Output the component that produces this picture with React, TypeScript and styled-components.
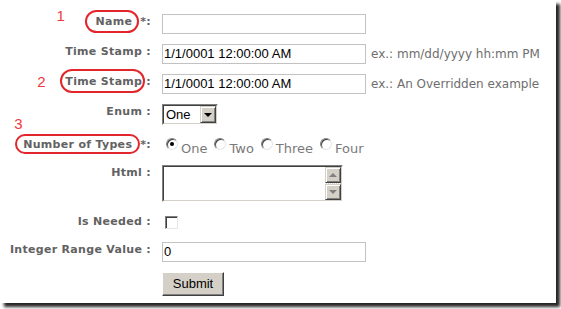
import React from 'react';
import styled, { createGlobalStyle } from 'styled-components';

const Global = createGlobalStyle`
  html, body { margin: 0; padding: 0; background: #fff; }
  body { width: 561px; height: 309px; overflow: hidden; }
`;

const Frame = styled.div`
  width: 556px;
  height: 303px;
  background: #fff;
  box-shadow: 4px 4px 3px rgba(0, 0, 0, 0.85);
  box-sizing: border-box;
  padding-top: 14px;
`;

const Form = styled.div`
  display: grid;
  grid-template-columns: 151px 1fr;
  column-gap: 11px;
  row-gap: 10px;
  align-items: center;
`;

const Label = styled.div<{ $pad?: number }>`
  font-family: "DejaVu Sans", Verdana, sans-serif;
  font-weight: bold;
  font-size: 11px;
  letter-spacing: 0.3px;
  line-height: 13px;
  color: #626262;
  text-align: right;
  white-space: nowrap;
  align-self: start;
  padding-top: ${(p) => p.$pad ?? 1}px;
`;

const Mark = styled.span<{ $l: number; $r: number; $t: number; $b: number; $gap: number }>`
  position: relative;
  margin-right: ${(p) => p.$gap}px;
  &::before {
    content: '';
    position: absolute;
    left: ${(p) => -p.$l}px;
    right: ${(p) => -p.$r}px;
    top: ${(p) => -p.$t}px;
    bottom: ${(p) => -p.$b}px;
    border: 2px solid #e3262b;
    border-radius: 13px;
  }
`;

const Num = styled.span<{ $x: number; $y: number }>`
  position: absolute;
  left: ${(p) => p.$x}px;
  top: ${(p) => p.$y}px;
  font-family: "Liberation Sans", Arial, sans-serif;
  font-weight: normal;
  font-size: 15px;
  line-height: 15px;
  letter-spacing: 0;
  color: #f0383c;
`;

const Field = styled.div`
  display: flex;
  align-items: center;
  gap: 5px;
  min-height: 20px;
`;

const TextBox = styled.div`
  width: 204px;
  height: 20px;
  box-sizing: border-box;
  border: 1px solid #c2c2c2;
  padding: 0 1px;
  font-family: "Liberation Sans", Arial, sans-serif;
  font-size: 13px;
  line-height: 18px;
  color: #000;
  white-space: nowrap;
`;

const Hint = styled.span`
  font-family: "DejaVu Sans", Verdana, sans-serif;
  font-size: 12px;
  color: #6e6e6e;
  white-space: nowrap;
`;

const Select = styled.div`
  width: 56px;
  height: 21px;
  box-sizing: border-box;
  border: 1px solid;
  border-color: #808080 #fff #fff #808080;
  display: flex;
`;

const SelectInner = styled.div`
  flex: 1;
  display: flex;
  border: 1px solid;
  border-color: #404040 #d4d0c8 #d4d0c8 #404040;
`;

const SelectText = styled.div`
  flex: 1;
  padding-left: 2px;
  font-family: "Liberation Sans", Arial, sans-serif;
  font-size: 13px;
  line-height: 17px;
  color: #000;
`;

const ScrollBtn = styled.div`
  width: 16px;
  box-sizing: border-box;
  background: #d4d0c8;
  border: 1px solid;
  border-color: #d4d0c8 #404040 #404040 #d4d0c8;
  box-shadow: inset 1px 1px 0 #fff, inset -1px -1px 0 #808080;
  display: flex;
  align-items: center;
  justify-content: center;
`;

const Arrow = styled.span<{ $up?: boolean; $color?: string }>`
  width: 0;
  height: 0;
  border-left: 4px solid transparent;
  border-right: 4px solid transparent;
  ${(p) =>
    p.$up
      ? `border-bottom: 4px solid ${p.$color || '#000'};`
      : `border-top: 4px solid ${p.$color || '#000'};`}
`;

const Radios = styled.div`
  display: flex;
  align-items: flex-start;
  gap: 7px;
  padding-left: 4px;
  height: 20px;
  padding-top: 6px;
  box-sizing: border-box;
`;

const Option = styled.label`
  display: inline-flex;
  align-items: flex-start;
  gap: 3px;
  font-family: "DejaVu Sans", Verdana, sans-serif;
  font-size: 13px;
  line-height: 15px;
  color: #7a7a7a;
`;

const Radio = styled.span<{ $on?: boolean }>`
  width: 12px;
  height: 12px;
  box-sizing: border-box;
  margin-top: -3px;
  border-radius: 50%;
  border: 1px solid;
  border-color: #808080 #e6e6e6 #e6e6e6 #808080;
  background: #fff;
  box-shadow: inset 1px 1px 0 #404040;
  display: flex;
  align-items: center;
  justify-content: center;
  &::after {
    content: '';
    width: 4px;
    height: 4px;
    border-radius: 50%;
    background: ${(p) => (p.$on ? '#000' : 'transparent')};
  }
`;

const TextArea = styled.div`
  width: 181px;
  height: 37px;
  box-sizing: border-box;
  border: 1px solid;
  border-color: #808080 #fff #fff #808080;
  display: flex;
`;

const TextAreaInner = styled.div`
  flex: 1;
  display: flex;
  justify-content: flex-end;
  border: 1px solid;
  border-color: #404040 #d4d0c8 #d4d0c8 #404040;
  background: #fff;
`;

const ScrollBar = styled.div`
  width: 16px;
  display: flex;
  flex-direction: column;
  justify-content: space-between;
  background: repeating-linear-gradient(90deg, #fff 0 1px, #d4d0c8 1px 2px);
`;

const ScrollPart = styled(ScrollBtn)`
  height: 16px;
`;

const Check = styled.span`
  display: block;
  width: 13px;
  height: 13px;
  margin-left: 3px;
  box-sizing: border-box;
  border: 1px solid;
  border-color: #808080 #e6e6e6 #e6e6e6 #808080;
  box-shadow: inset 1px 1px 0 #404040;
  background: #fff;
`;

const Button = styled.div`
  width: 62px;
  height: 24px;
  box-sizing: border-box;
  background: #d4d0c8;
  border: 1px solid;
  border-color: #fff #404040 #404040 #fff;
  box-shadow: inset -1px -1px 0 #808080;
  font-family: "Liberation Sans", Arial, sans-serif;
  font-size: 13px;
  line-height: 21px;
  text-align: center;
  color: #000;
`;

const Empty = styled.div``;

export default function App() {
  return (
    <>
      <Global />
      <Frame>
        <Form>
          <Label>
            <Mark $l={10} $r={7} $t={5} $b={5} $gap={8}>
              Name
              <Num $x={-39} $y={-7}>1</Num>
            </Mark>
            *:
          </Label>
          <Field>
            <TextBox />
          </Field>

          <Label>Time Stamp :</Label>
          <Field>
            <TextBox>1/1/0001 12:00:00 AM</TextBox>
            <Hint>ex.: mm/dd/yyyy hh:mm PM</Hint>
          </Field>

          <Label>
            <Mark $l={5} $r={3} $t={6} $b={5} $gap={4}>
              Time Stamp
              <Num $x={-28} $y={-1}>2</Num>
            </Mark>
            :
          </Label>
          <Field>
            <TextBox>1/1/0001 12:00:00 AM</TextBox>
            <Hint>ex.: An Overridden example</Hint>
          </Field>

          <Label>Enum :</Label>
          <Field>
            <Select>
              <SelectInner>
                <SelectText>One</SelectText>
                <ScrollBtn>
                  <Arrow />
                </ScrollBtn>
              </SelectInner>
            </Select>
          </Field>

          <Label $pad={3}>
            <Mark $l={8} $r={8} $t={4} $b={3} $gap={8}>
              Number of Types
              <Num $x={-9} $y={-22}>3</Num>
            </Mark>
            *:
          </Label>
          <Radios>
            <Option>
              <Radio $on />
              One
            </Option>
            <Option>
              <Radio />
              Two
            </Option>
            <Option>
              <Radio />
              Three
            </Option>
            <Option>
              <Radio />
              Four
            </Option>
          </Radios>

          <Label>Html :</Label>
          <Field>
            <TextArea>
              <TextAreaInner>
                <ScrollBar>
                  <ScrollPart>
                    <Arrow $up $color="#808080" />
                  </ScrollPart>
                  <ScrollPart>
                    <Arrow $color="#808080" />
                  </ScrollPart>
                </ScrollBar>
              </TextAreaInner>
            </TextArea>
          </Field>

          <Label $pad={3}>Is Needed :</Label>
          <Field>
            <Check />
          </Field>

          <Label>Integer Range Value :</Label>
          <Field>
            <TextBox>0</TextBox>
          </Field>

          <Empty />
          <Field>
            <Button>Submit</Button>
          </Field>
        </Form>
      </Frame>
    </>
  );
}
